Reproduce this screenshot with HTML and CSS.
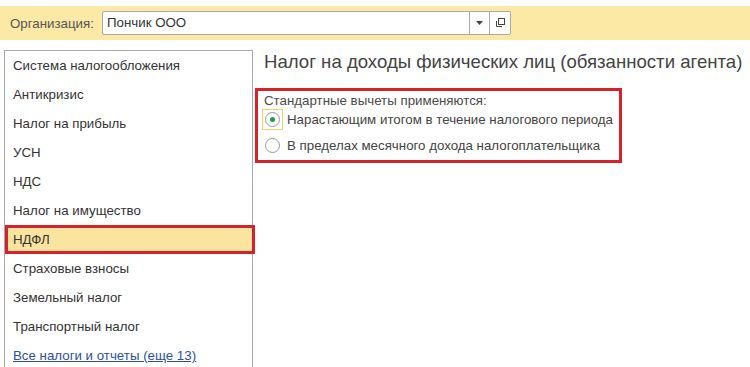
FILE: index.html
```html
<!DOCTYPE html>
<html lang="ru">
<head>
    <meta charset="UTF-8">
    <title>Налоги и отчеты</title>
    <link rel="stylesheet" href="styles.css">
</head>
<body>
    <div class="toolbar">
        <span class="org-label">Организация:</span>
        <div class="org-field">
            <span class="org-value">Пончик ООО</span>
            <span class="field-btn">
                <svg width="7" height="4" viewBox="0 0 7 4"><path d="M0 0H7L3.5 4Z" fill="#444"/></svg>
            </span>
            <span class="field-btn">
                <svg width="10" height="10" viewBox="0 0 10 10" fill="none" stroke="#444" stroke-width="1">
                    <rect x="3.5" y="0.5" width="6" height="6"/>
                    <path d="M1.5 3V8.5H7"/>
                </svg>
            </span>
        </div>
    </div>

    <div class="main">
        <div class="side-panel">
            <div class="side-item">Система налогообложения</div>
            <div class="side-item">Антикризис</div>
            <div class="side-item">Налог на прибыль</div>
            <div class="side-item">УСН</div>
            <div class="side-item">НДС</div>
            <div class="side-item">Налог на имущество</div>
            <div class="side-item active">НДФЛ</div>
            <div class="side-item">Страховые взносы</div>
            <div class="side-item">Земельный налог</div>
            <div class="side-item">Транспортный налог</div>
            <div class="side-item"><a class="side-link" href="#">Все налоги и отчеты (еще 13)</a></div>
        </div>

        <div class="content">
            <h1 class="page-title">Налог на доходы физических лиц (обязанности агента)</h1>

            <div class="deductions">
                <div class="group-label">Стандартные вычеты применяются:</div>
                <div class="radio-group">
                    <label class="radio-row">
                        <span class="radio-box focused"><span class="radio checked"></span></span>
                        Нарастающим итогом в течение налогового периода
                    </label>
                    <label class="radio-row">
                        <span class="radio-box"><span class="radio"></span></span>
                        В пределах месячного дохода налогоплательщика
                    </label>
                </div>
            </div>
        </div>
    </div>
</body>
</html>
```

FILE: styles.css
```css
* {
    margin: 0;
    padding: 0;
    box-sizing: border-box;
}

body {
    font-family: "Liberation Sans", Arial, sans-serif;
    font-size: 13.3px;
    color: #333;
    background: #fff;
    width: 750px;
    height: 367px;
    overflow: hidden;
}

/* Top bar */
.toolbar {
    margin-top: 6px;
    height: 34px;
    background-color: #fbe9a5;
    display: flex;
    align-items: center;
    padding-left: 10px;
}

.org-label {
    width: 92px;
    color: #555;
}

.org-field {
    width: 409px;
    height: 24px;
    display: flex;
    background: #fff;
    border: 1px solid #a9a9a9;
    border-radius: 2px;
}

.org-value {
    flex: 1;
    padding-left: 4px;
    line-height: 22px;
    color: #333;
}

.field-btn {
    width: 20px;
    border-left: 1px solid #a9a9a9;
    display: flex;
    align-items: center;
    justify-content: center;
}

.field-btn:last-child {
    width: 21px;
}

/* Main */
.main {
    display: flex;
    padding-top: 10px;
}

.side-panel {
    margin-left: 4px;
    width: 249px;
    height: 317px;
    border: 1px solid #a9a9a9;
    border-bottom: none;
}

.side-item {
    height: 29px;
    line-height: 29px;
    padding-left: 8px;
    color: #333;
    white-space: nowrap;
}

.side-item.active {
    background-color: #fbe4a0;
    border: 3px solid #d5222b;
    line-height: 23px;
    padding-left: 5px;
    margin-right: -3px;
}

.side-link {
    color: #2c4f9e;
    text-decoration: underline;
}

.content {
    margin-left: 2px;
}

.page-title {
    font-size: 18.6px;
    font-weight: normal;
    color: #444;
    line-height: 22px;
    margin-top: 1px;
    padding-left: 9px;
    white-space: nowrap;
}

.deductions {
    margin-top: 15px;
    width: 367px;
    height: 75px;
    border: 3px solid #d5222b;
    padding: 2px 6px 0 6px;
}

.group-label {
    line-height: 16px;
    color: #4a4a4a;
}

.radio-group {
    display: flex;
    flex-direction: column;
    gap: 6px;
}

.radio-row {
    display: flex;
    align-items: center;
    height: 20px;
    gap: 4px;
    color: #444;
    margin-left: -2px;
    white-space: nowrap;
}

.radio-box {
    width: 21px;
    height: 21px;
    display: flex;
    align-items: center;
    justify-content: center;
    border: 1px solid transparent;
}

.radio-box.focused {
    border-color: #e4d766;
}

.radio {
    width: 15px;
    height: 15px;
    border: 1px solid #9a9a9a;
    border-radius: 50%;
    background: #fff;
    display: flex;
    align-items: center;
    justify-content: center;
}

.radio.checked::after {
    content: "";
    width: 5px;
    height: 5px;
    border-radius: 50%;
    background: #1e9b4c;
}
```
